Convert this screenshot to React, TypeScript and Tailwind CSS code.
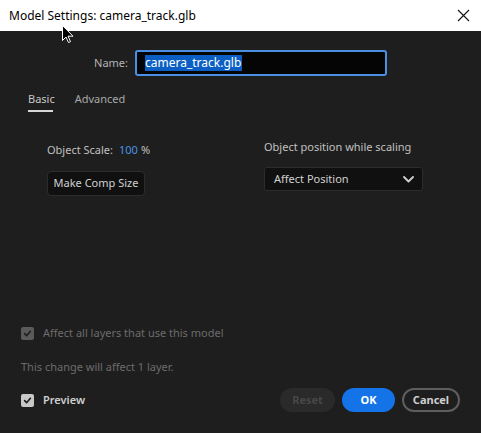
import React from "react";

const titleFont = { fontFamily: '"Noto Sans", "Open Sans", Arial, sans-serif' };
const bodyFont = { fontFamily: '"Noto Sans", "Open Sans", Arial, sans-serif' };

function Check({ disabled }: { disabled?: boolean }) {
  return (
    <span
      className={
        "flex h-[13px] w-[13px] items-center justify-center rounded-[2px] " +
        (disabled ? "bg-[#5a5a5a]" : "bg-[#c8c8c8]")
      }
    >
      <svg width="9" height="9" viewBox="0 0 10 10" fill="none">
        <path
          d="M1.8 5.2 L4 7.4 L8.2 2.6"
          stroke={disabled ? "#1e1e1e" : "#1a1a1a"}
          strokeWidth="1.8"
          strokeLinecap="round"
          strokeLinejoin="round"
        />
      </svg>
    </span>
  );
}

export default function App() {
  return (
    <div
      className="relative flex h-[433px] w-[481px] flex-col overflow-hidden bg-[#1e1e1e] text-[11px]"
      style={bodyFont}
    >
      {/* Title bar */}
      <div
        className="flex h-[31px] shrink-0 items-center justify-between bg-white pl-[9px] pr-[10px] text-[12px] text-black"
        style={titleFont}
      >
        <span>Model Settings: camera_track.glb</span>
        <svg width="13" height="13" viewBox="0 0 13 13" className="mr-[1px]">
          <path d="M1 1 L12 12 M12 1 L1 12" stroke="#111" strokeWidth="1.1" />
        </svg>
      </div>

      {/* Body */}
      <div className="flex flex-1 flex-col">
        {/* Name */}
        <div className="mt-[19px] flex items-center">
          <span className="w-[128px] text-right text-[#b4b4b4]">Name:</span>
          <div className="ml-[7px] flex h-[26px] w-[252px] items-center rounded-[3px] border-2 border-[#4b8fe2] bg-[#050505] px-[8px]">
            <span className="bg-[#0b5fc4] pr-[1px] text-[12px] leading-[16px] text-white">camera_track.glb</span>
          </div>
        </div>

        {/* Tabs */}
        <div className="mt-[15px] flex gap-[20px] pl-[28px]">
          <div className="flex flex-col items-start">
            <span className="leading-[16px] text-[#c8c8c8]">Basic</span>
            <span className="mt-[3px] h-[2px] w-[25px] bg-[#d8d8d8]" />
          </div>
          <span className="leading-[16px] text-[#a8a8a8]">Advanced</span>
        </div>

        {/* Content */}
        <div className="mt-[27px] flex">
          <div className="ml-[47px] flex w-[217px] flex-col">
            <div className="mt-[3px] flex items-center leading-[16px]">
              <span className="text-[#c0c0c0]">Object Scale:</span>
              <span className="ml-[6px] text-[#4a92e8]">100</span>
              <span className="ml-[3px] text-[#c0c0c0]">%</span>
            </div>
            <button className="mt-[13px] h-[25px] w-[98px] rounded-[4px] border border-[#2c2c2c] bg-[#101010] text-[#d0d0d0]">
              Make Comp Size
            </button>
          </div>
          <div className="flex flex-col">
            <span className="leading-[16px] text-[#c0c0c0]">Object position while scaling</span>
            <div className="mt-[12px] flex h-[24px] w-[159px] items-center justify-between rounded-[3px] border border-[#2c2c2c] bg-[#101010] pl-[9px] pr-[8px] text-[#d0d0d0]">
              <span>Affect Position</span>
              <svg width="11" height="7" viewBox="0 0 11 7" fill="none">
                <path d="M1 1 L5.5 5.5 L10 1" stroke="#d0d0d0" strokeWidth="1.8" strokeLinecap="round" strokeLinejoin="round" />
              </svg>
            </div>
          </div>
        </div>

        <div className="flex-1" />

        {/* Affect all layers */}
        <div className="flex items-center gap-[9px] pl-[21px] leading-[16px] text-[#6c6c6c]">
          <Check disabled />
          <span>Affect all layers that use this model</span>
        </div>
        <div className="mt-[18px] pl-[21px] leading-[16px] text-[#6c6c6c]">This change will affect 1 layer.</div>

        {/* Footer */}
        <div className="mb-[21px] mt-[13px] flex items-center justify-between pl-[21px] pr-[21px]">
          <div className="flex items-center gap-[9px] text-[#d0d0d0]">
            <Check />
            <span className="font-semibold">Preview</span>
          </div>
          <div className="flex items-center gap-[7px] font-bold">
            <button className="h-[24px] w-[55px] rounded-full bg-[#2a2a2a] text-[#474747]">Reset</button>
            <button className="h-[24px] w-[53px] rounded-full bg-[#1473e6] text-white">OK</button>
            <button className="h-[24px] w-[58px] rounded-full border-2 border-[#5e5e5e] text-[#d0d0d0]">Cancel</button>
          </div>
        </div>
      </div>

      {/* Mouse pointer */}
      <svg className="absolute left-[62px] top-[25px]" width="12" height="19" viewBox="0 0 12 19">
        <path d="M0.5 0.5 L0.5 15.5 L4 12 L6.5 17.5 L8.5 16.6 L6 11.2 L11 11.2 Z" fill="#000" stroke="#fff" strokeWidth="1" />
      </svg>
    </div>
  );
}
